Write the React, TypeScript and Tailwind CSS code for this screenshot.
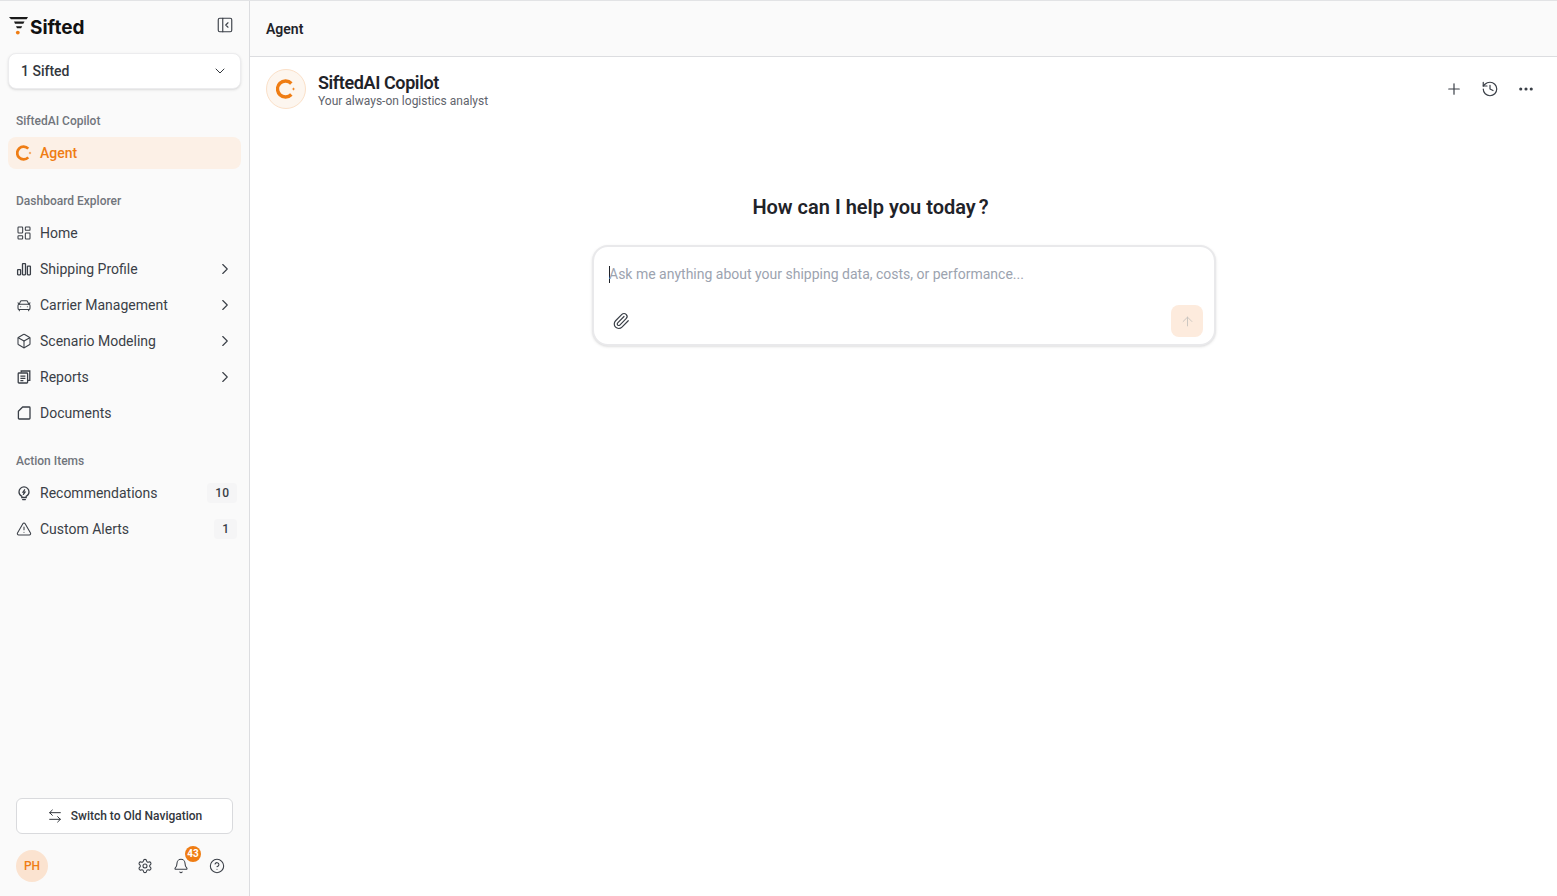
import {
  ArrowLeftRight,
  ArrowUp,
  Box,
  CarFront,
  ChevronDown,
  ChevronRight,
  CircleHelp,
  Bell,
  Ellipsis,
  History,
  LayoutDashboard,
  PanelLeftClose,
  Paperclip,
  Plus,
  Settings,
  TriangleAlert,
} from "lucide-react"
import type { ReactNode } from "react"

function CopilotMark({ size }: { size: number }) {
  return (
    <svg width={size} height={size} viewBox="0 0 24 24" fill="none">
      <path d="M18.4 5.4A9.6 9.6 0 1 0 18.4 18.6" stroke="#ef7d14" strokeWidth="4" />
      <path d="M21 9.8l.6 1.6 1.6.6-1.6.6-.6 1.6-.6-1.6-1.6-.6 1.6-.6z" fill="#ef7d14" />
    </svg>
  )
}

function Bars() {
  return (
    <svg width="16" height="16" viewBox="0 0 16 16" fill="none" stroke="currentColor" strokeWidth="1.3">
      <rect x="1.6" y="8.6" width="3" height="5.2" rx="0.5" />
      <rect x="6.5" y="2.6" width="3" height="11.2" rx="0.5" />
      <rect x="11.4" y="5.1" width="3" height="8.7" rx="0.5" />
    </svg>
  )
}

function ReportsIcon() {
  return (
    <svg width="16" height="16" viewBox="0 0 16 16" fill="none" stroke="currentColor" strokeWidth="1.3">
      <path d="M5.2 3.6V2h8.6v9.4h-2" />
      <rect x="2.2" y="4" width="9.4" height="10" rx="0.8" />
      <path d="M4.4 7.2h5M4.4 9.4h5M4.4 11.6h3" />
    </svg>
  )
}

function DocumentIcon() {
  return (
    <svg width="16" height="16" viewBox="0 0 16 16" fill="none" stroke="currentColor" strokeWidth="1.3" strokeLinejoin="round">
      <path d="M6.6 2h6.6a.8.8 0 0 1 .8.8v10.4a.8.8 0 0 1-.8.8H3.2a.8.8 0 0 1-.8-.8V6.2z" />
    </svg>
  )
}

function BulbIcon() {
  return (
    <svg width="16" height="16" viewBox="0 0 16 16" fill="none" stroke="currentColor" strokeWidth="1.3" strokeLinecap="round">
      <path d="M5.8 11.2C4.2 10.3 3 8.8 3 6.9a5 5 0 0 1 10 0c0 1.9-1.2 3.4-2.8 4.3v1.3H5.8z" />
      <path d="M6.6 14.6h2.8" />
      <path d="M8.6 4.8 7 7.2h2L7.4 9.4" />
    </svg>
  )
}

function Logo() {
  return (
    <div className="ml-px flex items-center">
      <svg width="19" height="18" viewBox="0 0 19 18" className="mb-[2px] shrink-0">
        <path d="M0 0h19l-1.4 2.2H2z" fill="#1a1a1a" />
        <path d="M5 4.6h10.5l-1.2 2.1H6z" fill="#1a1a1a" />
        <path d="M7 9.2h6.2l-1.1 2H8z" fill="#1a1a1a" />
        <circle cx="8.8" cy="15.6" r="1.9" fill="#ef7d14" />
      </svg>
      <span className="ml-0.5 text-[19px] leading-none font-bold text-[#111] font-['Inter',sans-serif]">
        Sifted
      </span>
    </div>
  )
}

function SectionLabel({ children }: { children: ReactNode }) {
  return <div className="px-2 text-xs leading-4 font-medium text-[#71757c]">{children}</div>
}

function NavRow({ icon, label, chevron, badge }: { icon: ReactNode; label: string; chevron?: boolean; badge?: string }) {
  return (
    <div className="flex h-9 items-center gap-2 px-2 text-[#3a3f47]">
      <span className="flex w-4 shrink-0 justify-center">{icon}</span>
      <span className="flex-1 text-sm leading-5">{label}</span>
      {chevron && <ChevronRight size={18} strokeWidth={1.5} className="-mr-px" />}
      {badge && (
        <span className="-mr-1 flex h-5 items-center justify-center rounded bg-[#f5f5f6] px-2 text-xs font-medium text-[#3a3f47]">
          {badge}
        </span>
      )}
    </div>
  )
}

function Sidebar() {
  return (
    <aside className="flex h-full w-[250px] shrink-0 flex-col border-r border-[#dcdde0] bg-[#fafafa] px-2">
      <div className="flex h-[52px] items-center justify-between pr-[7px]">
        <Logo />
        <PanelLeftClose size={18} strokeWidth={1.5} className="mb-1 text-[#3a3f47]" />
      </div>
      <div className="flex h-9 w-[233px] items-center justify-between rounded-lg border border-[#ececee] bg-white px-3 text-sm font-medium text-[#33373d] shadow-sm">
        1 Sifted
        <ChevronDown size={16} strokeWidth={1.5} />
      </div>
      <div className="mt-6">
        <SectionLabel>SiftedAI Copilot</SectionLabel>
      </div>
      <div className="mt-2 flex h-8 w-[233px] items-center gap-2 rounded-lg bg-[#fcf0e6] px-2 text-sm font-medium text-[#ef7d14]">
        <CopilotMark size={16} />
        Agent
      </div>
      <div className="mt-6">
        <SectionLabel>Dashboard Explorer</SectionLabel>
      </div>
      <div className="mt-1.5 w-[233px]">
        <NavRow icon={<LayoutDashboard size={16} strokeWidth={1.6} />} label="Home" />
        <NavRow icon={<Bars />} label="Shipping Profile" chevron />
        <NavRow icon={<CarFront size={17} strokeWidth={1.6} />} label="Carrier Management" chevron />
        <NavRow icon={<Box size={16} strokeWidth={1.6} />} label="Scenario Modeling" chevron />
        <NavRow icon={<ReportsIcon />} label="Reports" chevron />
        <NavRow icon={<DocumentIcon />} label="Documents" />
      </div>
      <div className="mt-[22px]">
        <SectionLabel>Action Items</SectionLabel>
      </div>
      <div className="mt-1.5 w-[233px]">
        <NavRow icon={<BulbIcon />} label="Recommendations" badge="10" />
        <NavRow icon={<TriangleAlert size={16} strokeWidth={1.6} />} label="Custom Alerts" badge="1" />
      </div>
      <div className="mt-auto px-2 pb-3.5">
        <button className="flex h-9 w-[217px] items-center justify-center gap-2 rounded-md border border-[#d9dadd] bg-white text-xs font-medium text-[#33373d]">
          <ArrowLeftRight size={16} strokeWidth={1.5} />
          Switch to Old Navigation
        </button>
        <div className="mt-4 flex items-center text-[#3a3f47]">
          <div className="flex h-8 w-8 items-center justify-center rounded-full bg-[#fbe3d0] text-xs font-medium text-[#ef7d14]">
            PH
          </div>
          <div className="ml-auto mr-2 flex items-center gap-5">
            <Settings size={16} strokeWidth={1.6} />
            <div className="relative">
              <Bell size={16} strokeWidth={1.6} />
              <span className="absolute -top-3 left-3 flex h-4 w-4 items-center justify-center rounded-full bg-[#ef7d14] text-[10px] font-bold leading-none text-white">
                43
              </span>
            </div>
            <CircleHelp size={16} strokeWidth={1.6} />
          </div>
        </div>
      </div>
    </aside>
  )
}

export default function App() {
  return (
    <div className="flex h-[896px] w-full overflow-hidden border-t border-[#e2e3e5] bg-white font-['Roboto',sans-serif]">
      <Sidebar />
      <main className="flex min-w-0 flex-1 flex-col">
        <header className="flex h-[56px] shrink-0 items-center border-b border-[#dcdde0] bg-[#fafafa] px-4">
          <h1 className="text-sm font-semibold text-[#1f2329]">Agent</h1>
        </header>
        <div className="flex h-16 items-center justify-between px-4">
          <div className="flex items-center gap-3">
            <div className="flex h-10 w-10 items-center justify-center rounded-full border border-[#fbe0c8] bg-[#fdf6ef]">
              <CopilotMark size={20} />
            </div>
            <div className="mt-0.5">
              <div className="text-lg leading-[22px] font-semibold tracking-[-0.4px] text-[#1f2329]">SiftedAI Copilot</div>
              <div className="text-xs leading-[14px] text-[#5f646c]">Your always-on logistics analyst</div>
            </div>
          </div>
          <div className="flex items-center gap-[18px] pr-1.5 text-[#3a3f47]">
            <Plus size={18} strokeWidth={1.6} />
            <History size={18} strokeWidth={1.6} />
            <Ellipsis size={18} strokeWidth={2.2} />
          </div>
        </div>
        <div className="flex flex-col items-center pt-[72px]">
          <h2 className="pr-[66px] text-xl leading-7 font-semibold text-[#1f2329]">
            How can I help you today <span className="-ml-0.5">?</span>
          </h2>
          <div className="mt-6 ml-px flex h-[101px] w-[624px] flex-col justify-between rounded-2xl border-2 border-[#e9e9eb] bg-white pt-[17px] pr-[11px] pb-[7px] pl-[15px] shadow-sm">
            <div className="flex items-center text-sm leading-5 text-[#9ca3af]">
              <span className="-mr-px h-[17px] w-px bg-[#1f2329]" />
              Ask me anything about your shipping data, costs, or performance...
            </div>
            <div className="flex items-center justify-between">
              <Paperclip size={18} strokeWidth={1.6} className="ml-[3px] text-[#3a3f47]" />
              <button className="flex h-8 w-8 items-center justify-center rounded-lg bg-[#fdebdd] text-[#c9c4bf]">
                <ArrowUp size={15} strokeWidth={1.5} />
              </button>
            </div>
          </div>
        </div>
      </main>
    </div>
  )
}
